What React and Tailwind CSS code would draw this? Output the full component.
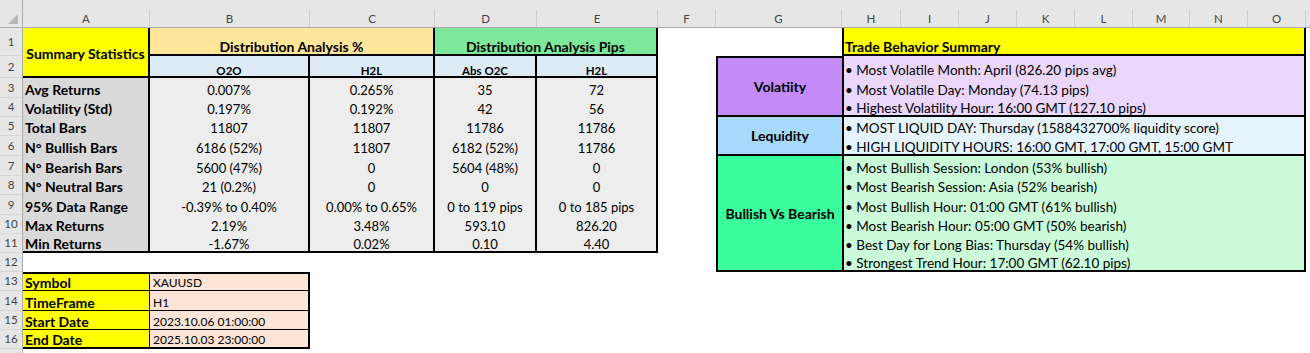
const cols = [
  ['A', 'w-[127px]'],
  ['B', 'w-[160px]'],
  ['C', 'w-[125px]'],
  ['D', 'w-[102px]'],
  ['E', 'w-[121px]'],
  ['F', 'w-[58px]'],
  ['G', 'w-[126px]'],
  ['H', 'w-[59px]'],
  ['I', 'w-[58px]'],
  ['J', 'w-[58px]'],
  ['K', 'w-[58px]'],
  ['L', 'w-[58px]'],
  ['M', 'w-[57px]'],
  ['N', 'w-[58px]'],
  ['O', 'w-[58px]'],
];

const rowHeights = [
  'h-[28px]', 'h-[22px]', 'h-[20px]', 'h-[19px]', 'h-[19px]', 'h-[20px]', 'h-[20px]', 'h-[19px]',
  'h-[20px]', 'h-[19px]', 'h-[19px]', 'h-[19px]', 'h-[19px]', 'h-[20px]', 'h-[19px]', 'h-[19px]',
];

const rs = [
  '', 'row-start-1', 'row-start-2', 'row-start-3', 'row-start-4', 'row-start-5', 'row-start-6',
  'row-start-7', 'row-start-8', 'row-start-9', 'row-start-10', 'row-start-11', 'row-start-12',
  'row-start-13', 'row-start-14', 'row-start-15', 'row-start-16',
];

const stats = [
  ['Avg Returns', '0.007%', '0.265%', '35', '72'],
  ['Volatility (Std)', '0.197%', '0.192%', '42', '56'],
  ['Total Bars', '11807', '11807', '11786', '11786'],
  ['N° Bullish Bars', '6186 (52%)', '11807', '6182 (52%)', '11786'],
  ['N° Bearish Bars', '5600 (47%)', '0', '5604 (48%)', '0'],
  ['N° Neutral Bars', '21 (0.2%)', '0', '0', '0'],
  ['95% Data Range', '-0.39% to 0.40%', '0.00% to 0.65%', '0 to 119 pips', '0 to 185 pips'],
  ['Max Returns', '2.19%', '3.48%', '593.10', '826.20'],
  ['Min Returns', '-1.67%', '0.02%', '0.10', '4.40'],
];

const info = [
  ['Symbol', 'XAUUSD'],
  ['TimeFrame', 'H1'],
  ['Start Date', '2023.10.06 01:00:00'],
  ['End Date', '2025.10.03 23:00:00'],
];

const behavior = [
  {
    title: 'Volatiity',
    head: 'row-start-2 row-span-3 border-t-2 bg-[#c48bf8]',
    cell: 'bg-[#ebd6fc]',
    start: 2,
    lines: [
      'Most Volatile Month: April (826.20 pips avg)',
      'Most Volatile Day: Monday (74.13 pips)',
      'Highest Volatility Hour: 16:00 GMT (127.10 pips)',
    ],
  },
  {
    title: 'Lequidity',
    head: 'row-start-5 row-span-2 bg-[#a6d9fc]',
    cell: 'bg-[#e6f5fd]',
    start: 5,
    lines: [
      'MOST LIQUID DAY: Thursday (1588432700% liquidity score)',
      'HIGH LIQUIDITY HOURS: 16:00 GMT, 17:00 GMT, 15:00 GMT',
    ],
  },
  {
    title: 'Bullish Vs Bearish',
    head: 'row-start-7 row-span-6 bg-[#3bfd9c]',
    cell: 'bg-[#cbfbd9]',
    start: 7,
    lines: [
      'Most Bullish Session: London (53% bullish)',
      'Most Bearish Session: Asia (52% bearish)',
      'Most Bullish Hour: 01:00 GMT (61% bullish)',
      'Most Bearish Hour: 05:00 GMT (50% bearish)',
      'Best Day for Long Bias: Thursday (54% bullish)',
      'Strongest Trend Hour: 17:00 GMT (62.10 pips)',
    ],
  },
];

// leading is set per cell so that two leading classes never meet
const cell = 'flex items-end border-black whitespace-nowrap overflow-hidden';

export default function App() {
  return (
    <div className="w-[1310px] h-[353px] overflow-hidden bg-white text-black font-[Lato,'Liberation_Sans',sans-serif]">
      {/* column letters */}
      <div className="flex items-end h-[28px] bg-[#e6e6e6] border-b border-[#ababab]">
        <div className="w-[23px] h-full flex items-end justify-end pr-[4px] pb-[3px] border-r border-[#ababab]">
          <svg width="10" height="10" viewBox="0 0 10 10">
            <polygon points="10,0 10,10 0,10" fill="#b8b8b8" />
          </svg>
        </div>
        {cols.map(([l, w]) => (
          <div key={l} className={`${w} h-[17px] flex items-center justify-center border-r border-[#cdcdcd] text-[11.5px] text-[#444]`}>
            {l}
          </div>
        ))}
        <div className="flex-1" />
      </div>

      <div className="flex h-[325px]">
        {/* row numbers */}
        <div className="w-[23px] flex flex-col bg-[#e6e6e6] border-r border-[#ababab]">
          {rowHeights.map((h, i) => (
            <div key={i} className={`${h} flex items-center justify-center border-b border-[#d6d6d6] text-[11.5px] text-[#444] shrink-0`}>
              {i + 1}
            </div>
          ))}
        </div>

        {/* sheet */}
        <div className="flex-1 grid grid-cols-[127px_160px_125px_102px_121px_58px_126px_59px_58px_58px_58px_58px_57px_58px_58px_1fr] grid-rows-[28px_22px_20px_19px_19px_20px_20px_19px_20px_19px_19px_19px_19px_20px_19px_19px_1fr] text-[13px]">
          {/* summary statistics header */}
          <div className="col-start-1 row-start-1 row-span-2 bg-[#ffff00] border-r-2 border-b-2 border-black flex items-center justify-center font-bold text-[14px] pt-[2px]">
            Summary Statistics
          </div>
          <div className={`${cell} col-start-2 col-span-2 row-start-1 bg-[#ffe699] border-r-2 border-b-2 justify-center font-bold text-[14px] leading-[15px]`}>
            Distribution Analysis %
          </div>
          <div className={`${cell} col-start-4 col-span-2 row-start-1 bg-[#7de899] border-r-2 border-b-2 justify-center font-bold text-[14px] leading-[15px]`}>
            Distribution Analysis Pips
          </div>
          <div className={`${cell} col-start-2 row-start-2 bg-[#ddebf7] border-r-2 border-b-2 justify-center font-bold text-[11.5px] leading-[11px]`}>O2O</div>
          <div className={`${cell} col-start-3 row-start-2 bg-[#ddebf7] border-r-2 border-b-2 justify-center font-bold text-[11.5px] leading-[11px]`}>H2L</div>
          <div className={`${cell} col-start-4 row-start-2 bg-[#ddebf7] border-r-2 border-b-2 justify-center font-bold text-[11.5px] leading-[11px]`}>Abs O2C</div>
          <div className={`${cell} col-start-5 row-start-2 bg-[#ddebf7] border-r-2 border-b-2 justify-center font-bold text-[11.5px] leading-[11px]`}>H2L</div>

          {stats.map((s, i) => {
            const r = rs[i + 3];
            const last = i === stats.length - 1 ? 'border-b-2 leading-[14px]' : 'leading-[16px]';
            return [
              <div key={`a${i}`} className={`${cell} col-start-1 ${r} ${last} bg-[#d9d9d9] border-r-2 pl-[2px] font-bold text-[14px]`}>{s[0]}</div>,
              <div key={`b${i}`} className={`${cell} col-start-2 ${r} ${last} bg-[#ededed] border-r-2 justify-center`}>{s[1]}</div>,
              <div key={`c${i}`} className={`${cell} col-start-3 ${r} ${last} bg-[#ededed] border-r-2 justify-center`}>{s[2]}</div>,
              <div key={`d${i}`} className={`${cell} col-start-4 ${r} ${last} bg-[#ededed] border-r-2 justify-center`}>{s[3]}</div>,
              <div key={`e${i}`} className={`${cell} col-start-5 ${r} ${last} bg-[#ededed] border-r-2 justify-center`}>{s[4]}</div>,
            ];
          })}

          {/* symbol info */}
          {info.map(([k, v], i) => {
            const r = rs[i + 13];
            const edge = i === 0 ? 'border-t-2' : '';
            const bottom = i === info.length - 1 ? 'border-b-2 leading-[14px]' : 'border-b leading-[15px]';
            return [
              <div key={`k${i}`} className={`${cell} col-start-1 ${r} ${edge} ${bottom} bg-[#ffff00] border-r pl-[2px] font-bold text-[14px]`}>{k}</div>,
              <div key={`v${i}`} className={`${cell} col-start-2 ${r} ${edge} ${bottom} bg-[#fce4d6] border-r-2 pl-[3px] text-[12px]`}>{v}</div>,
            ];
          })}

          {/* trade behavior */}
          <div className={`${cell} col-start-8 col-span-8 row-start-1 bg-[#ffff00] border-l-2 border-r-2 border-b-2 pl-px font-bold text-[14px] leading-[15px]`}>
            Trade Behavior Summary
          </div>
          {behavior.map((b) => [
            <div key={b.title} className={`col-start-7 ${b.head} border-l-2 border-b-2 border-black flex items-center justify-center font-bold text-[14px]`}>
              {b.title}
            </div>,
            ...b.lines.map((t, j) => (
              <div
                key={t}
                className={`${cell} col-start-8 col-span-8 ${rs[b.start + j]} ${b.cell} border-l-2 border-r-2 pl-px text-[13.5px] ${j === b.lines.length - 1 ? 'border-b-2 leading-[14px]' : 'leading-[16px]'}`}
              >
                • {t}
              </div>
            )),
          ])}
        </div>
      </div>
    </div>
  );
}
